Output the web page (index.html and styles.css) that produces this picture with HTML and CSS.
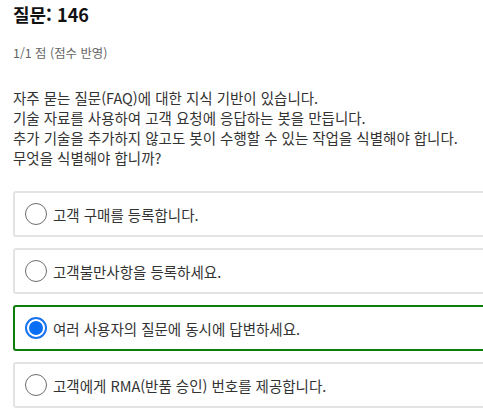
FILE: index.html
```html
<!DOCTYPE html>
<html lang="ko">
<head>
<meta charset="utf-8">
<link rel="stylesheet" href="styles.css">
</head>
<body>
<div class="page">
  <h1 class="title">질문: 146</h1>
  <div class="score">1/1 점 (점수 반영)</div>
  <div class="question">
    <p>자주 묻는 질문(FAQ)에 대한 지식 기반이 있습니다.</p>
    <p>기술 자료를 사용하여 고객 요청에 응답하는 봇을 만듭니다.</p>
    <p>추가 기술을 추가하지 않고도 봇이 수행할 수 있는 작업을 식별해야 합니다.</p>
    <p>무엇을 식별해야 합니까?</p>
  </div>
  <div class="options">
    <label class="option"><span class="radio"></span><span class="label">고객 구매를 등록합니다.</span></label>
    <label class="option"><span class="radio"></span><span class="label">고객불만사항을 등록하세요.</span></label>
    <label class="option selected"><span class="radio checked"></span><span class="label">여러 사용자의 질문에 동시에 답변하세요.</span></label>
    <label class="option"><span class="radio"></span><span class="label">고객에게 RMA(반품 승인) 번호를 제공합니다.</span></label>
  </div>
</div>
</body>
</html>
```

FILE: styles.css
```css
html, body {
  margin: 0;
  padding: 0;
  overflow: hidden;
  background: #fff;
}
body {
  font-family: "Noto Sans CJK KR", "Noto Sans", sans-serif;
  color: #333;
}
.page {
  padding: 0 0 0 13px;
  width: 520px;
}
.title {
  margin: 0;
  padding-top: 2px;
  font-size: 18px;
  line-height: 24px;
  font-weight: 700;
  color: #111;
}
.score {
  margin-top: 18px;
  font-size: 12.4px;
  line-height: 18px;
  color: #666;
}
.question {
  margin-top: 26px;
  font-size: 14.5px;
  line-height: 20px;
  color: #333;
}
.question p {
  margin: 0;
}
.options {
  margin-top: 23px;
  display: flex;
  flex-direction: column;
  gap: 11px;
}
.option {
  display: flex;
  align-items: center;
  gap: 6px;
  height: 46px;
  box-sizing: border-box;
  padding-left: 10px;
  border: 2px solid #e3e3e3;
  border-radius: 3px;
  font-size: 14.5px;
  color: #333;
}
.option.selected {
  border-color: #0a7d0a;
}
.radio {
  width: 22px;
  height: 22px;
  box-sizing: border-box;
  border: 1px solid #6e6e6e;
  border-radius: 50%;
  flex: none;
  position: relative;
}
.radio.checked {
  border: 2px solid #1a73f0;
}
.radio.checked::after {
  content: "";
  position: absolute;
  left: 2px;
  top: 2px;
  width: 14px;
  height: 14px;
  border-radius: 50%;
  background: #0a6ef5;
}
```
